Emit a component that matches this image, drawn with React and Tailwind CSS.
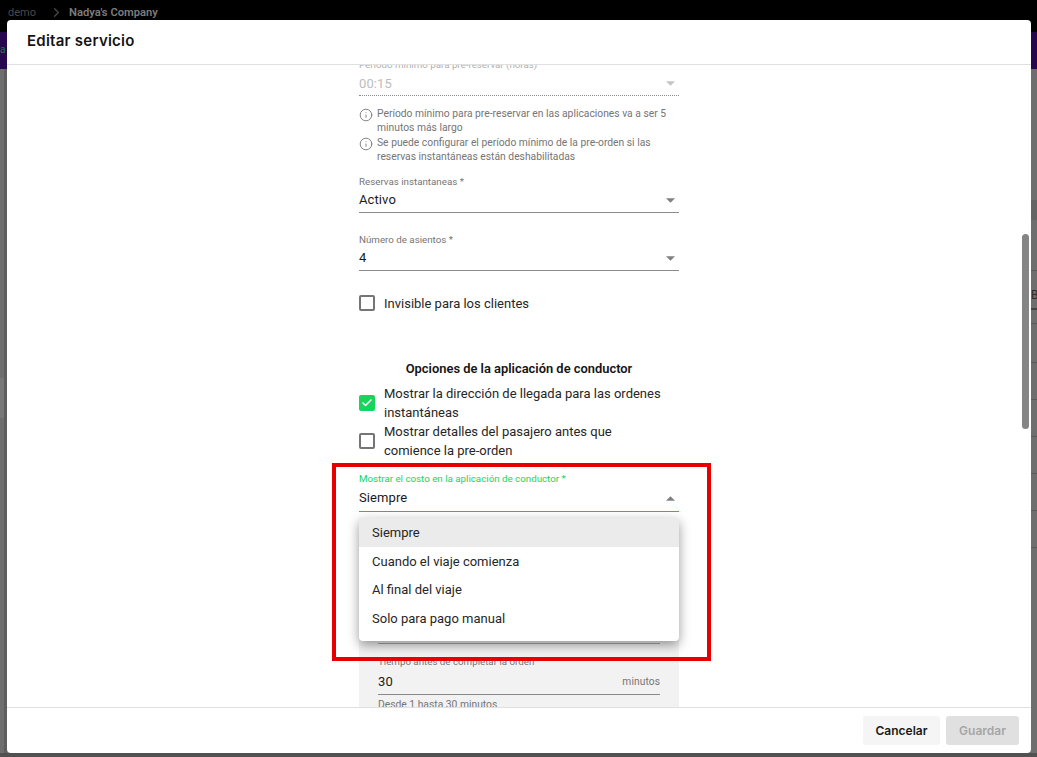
import { ChevronRight, Info, Check } from 'lucide-react';

const Arrow = ({ up, light }) => (
  <svg width="9" height="5" viewBox="0 0 10 5" className={light ? 'text-[#c4c4c4]' : 'text-[#808080]'}>
    <path d={up ? 'M0 5 L5 0 L10 5 Z' : 'M0 0 L5 5 L10 0 Z'} fill="currentColor" />
  </svg>
);

const SelectField = ({ label, value, className = '' }) => (
  <div className={className}>
    <div className="pt-[1px] h-[14px] text-[9.75px] leading-[14px] text-[#757575]">{label} *</div>
    <div className="flex h-[25px] items-center justify-between border-b border-[#8a8a8a] pr-[4px] text-[13px] tracking-[0.1px] text-[#1a1a1a]">
      <span>{value}</span>
      <Arrow />
    </div>
  </div>
);

const Hint = ({ children }) => (
  <div className="flex gap-[4px] text-[10.3px] leading-[14px] text-[#757575]">
    <Info size={14} strokeWidth={1.5} className="mt-[1px] shrink-0" />
    <span>{children}</span>
  </div>
);

const CheckRow = ({ checked, children, className = '' }) => (
  <div className={`flex items-center gap-[9px] text-[13px] leading-[19px] text-[#262626] ${className}`}>
    {checked ? (
      <span className="flex h-[16px] w-[16px] shrink-0 items-center justify-center rounded-[2px] bg-[#18d45c]">
        <Check size={12} strokeWidth={3} className="text-white" />
      </span>
    ) : (
      <span className="h-[16px] w-[16px] shrink-0 rounded-[2px] border-2 border-[#757575]" />
    )}
    <span className="max-w-[282px]">{children}</span>
  </div>
);

const menuItems = ['Cuando el viaje comienza', 'Al final del viaje', 'Solo para pago manual'];

export default function App() {
  return (
    <div className="relative h-[757px] w-[1037px] overflow-hidden bg-[#6e6e6e] font-['Roboto',sans-serif]">
      {/* page behind the dialog */}
      <div className="flex h-[32px] items-start bg-black pl-[8px] pt-[5px] text-[11px]">
        <span className="w-[41px] text-[#4a4a4a]">demo</span>
        <ChevronRight size={15} className="text-[#4a4a4a]" />
        <span className="ml-[5px] text-[11.2px] font-semibold text-[#7c7c7c]">Nadya's Company</span>
      </div>
      <div className="h-[37px] bg-[#25064f] pt-[10px] text-[10px] text-[#1f7a3d]">a</div>
      <div className="flex">
        <div className="w-[4px] shrink-0">
          <div className="mt-[309px] h-[40px] bg-[#787878]" />
        </div>
        <div className="h-[688px] w-[3px] shrink-0 bg-[#5e5e5e]" />
        <div className="ml-[1024px] w-[6px] shrink-0">
          <div className="mt-[131px] h-[20px] bg-[#646464]" />
          <div className="h-[51px] border-b border-[#5a5a5a]" />
          <div className="h-[39px] border-b-2 border-[#444444] pt-[17px] text-xs leading-[14px] text-[#2e2e2e]">Bu</div>
          <div className="h-[14px] border-b border-[#5a5a5a]" />
          <div className="h-[39px] border-b border-[#5a5a5a]" />
          <div className="h-[37px] border-b border-[#5a5a5a]" />
          <div className="h-[37px] border-b border-[#5a5a5a]" />
          <div className="h-[37px] border-b border-[#5a5a5a]" />
          <div className="h-[37px] border-b border-[#5a5a5a]" />
          <div className="h-[37px] border-b border-[#5a5a5a]" />
        </div>
      </div>

      <div className="absolute bottom-0 left-0 h-[4px] w-full bg-[#515151]" />

      <div className="absolute left-[7px] top-[20px] flex h-[733px] w-[1024px] flex-col rounded-[4px] bg-white">
        <div className="flex h-[45px] shrink-0 items-center border-b border-[#e0e0e0] pb-[2px] pl-[20px] font-['Inter',sans-serif] text-[15px] font-semibold tracking-[0.25px] text-[#141414]">
          Editar servicio
        </div>

        <div className="relative min-h-0 flex-1 overflow-hidden">
          <div className="mx-auto -mt-[8px] w-[320px]">
            <div className="h-[14px] pt-[1px] text-[9.75px] leading-[14px] text-[#b0b0b0]">Período mínimo para pre-reservar (horas)</div>
            <div className="flex h-[25px] items-center justify-between border-b border-dotted border-[#8a8a8a] pr-[4px] pt-[1px] text-[13px] tracking-[0.1px] text-[#bdbdbd]">
              <span>00:15</span>
              <Arrow light />
            </div>

            <div className="mt-[11px] flex flex-col gap-[1px]">
              <Hint>Período mínimo para pre-reservar en las aplicaciones va a ser 5 minutos más largo</Hint>
              <Hint>Se puede configurar el período mínimo de la pre-orden si las reservas instantáneas están deshabilitadas</Hint>
            </div>

            <SelectField label="Reservas instantaneas" value="Activo" className="mt-[10px]" />
            <SelectField label="Número de asientos" value="4" className="mt-[19px]" />

            <CheckRow className="mt-[20px] h-[24px]">Invisible para los clientes</CheckRow>

            <div className="mt-[44px] h-[20px] text-center text-[12.9px] font-semibold leading-[20px] text-[#141414]">
              Opciones de la aplicación de conductor
            </div>

            <CheckRow checked className="mt-[5px]">Mostrar la dirección de llegada para las ordenes instantáneas</CheckRow>
            <CheckRow>Mostrar detalles del pasajero antes que comience la pre-orden</CheckRow>

            <div className="relative mt-[11px]">
              <div className="h-[14px] pt-[1px] text-[9.75px] leading-[14px] text-[#18d45c]">Mostrar el costo en la aplicación de conductor *</div>
              <div className="flex h-[27px] items-center justify-between border-b border-[#18c95a] pr-[4px] text-[13px] tracking-[0.1px] text-[#1a1a1a]">
                <span>Siempre</span>
                <Arrow up />
              </div>

              <div className="absolute left-0 top-[47px] z-20 w-full rounded-b-[4px] bg-white pb-[8px] text-[13px] text-[#262626] shadow-[0_4px_12px_rgba(0,0,0,0.4)]">
                <div className="flex h-[29px] items-center bg-[#ebebeb] px-[13px]">Siempre</div>
                {menuItems.map((item) => (
                  <div key={item} className="flex h-[28.6px] items-center px-[13px]">{item}</div>
                ))}
              </div>

              {/* red annotation frame */}
              <div className="absolute -left-[27px] -top-[8px] z-30 h-[198px] w-[379px] border-4 border-[#e60000]" />
            </div>

            <div className="mt-[88px] bg-[#f2f2f2] px-[19px] pb-[10px]">
              <div className="h-[44px] border-b border-[#a8a8a8]" />
              <div className="mt-[11px] h-[14px] text-[9.75px] leading-[14px] text-[#757575]">Tiempo antes de completar la orden</div>
              <div className="flex h-[26px] items-center justify-between border-b border-[#8a8a8a] text-[13px] tracking-[0.1px] text-[#1a1a1a]">
                <span>30</span>
                <span className="text-[10.2px] text-[#757575]">minutos</span>
              </div>
              <div className="mt-[3px] h-[14px] text-[10.3px] leading-[14px] text-[#757575]">Desde 1 hasta 30 minutos</div>
            </div>
          </div>

          {/* scrollbar */}
          <div className="absolute left-[1015px] top-[169px] h-[195px] w-[7px] rounded-full bg-[#858585]" />
        </div>

        <div className="flex h-[46px] shrink-0 items-center justify-end gap-[6px] border-t border-[#e0e0e0] pr-[12px] font-['Inter',sans-serif] text-xs font-semibold">
          <button className="h-[29px] w-[77px] rounded-[3px] bg-[#f5f5f5] text-[#1a1a1a]">Cancelar</button>
          <button disabled className="h-[29px] w-[73px] rounded-[3px] bg-[#e0e0e0] text-[#a6a6a6]">Guardar</button>
        </div>
      </div>
    </div>
  );
}
